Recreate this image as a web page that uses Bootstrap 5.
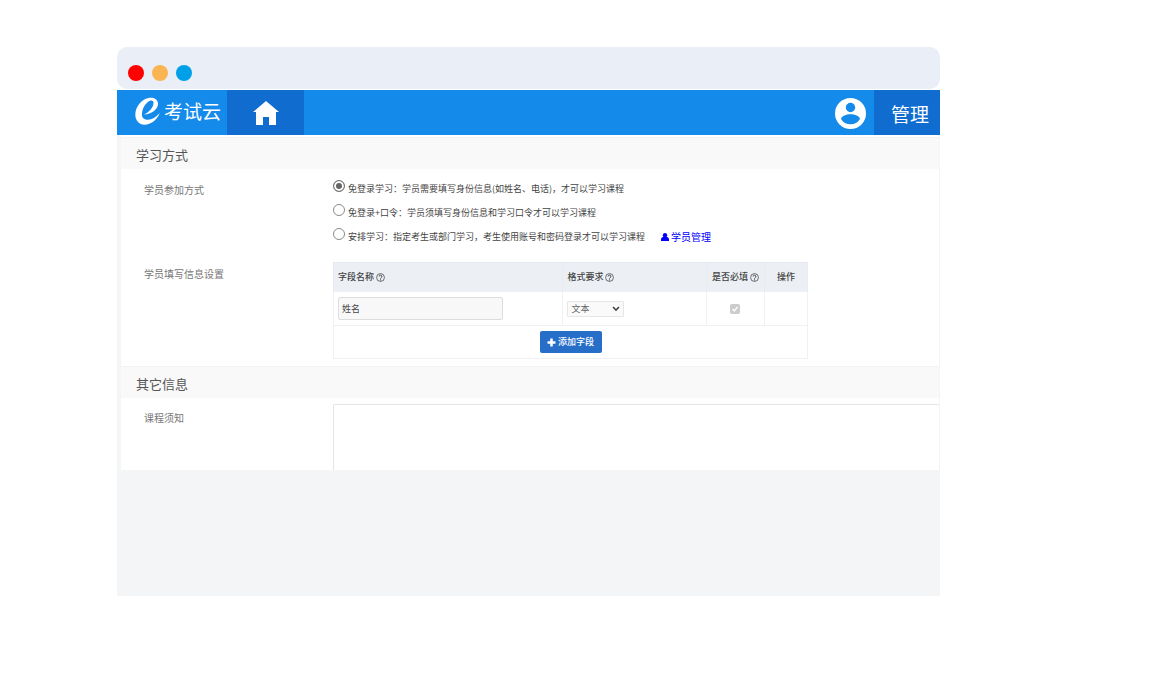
<!DOCTYPE html>
<html lang="zh-CN">
<head>
<meta charset="utf-8">
<meta name="viewport" content="width=device-width, initial-scale=1">
<title>考试云</title>
<link href="https://cdn.jsdelivr.net/npm/bootstrap@5.3.0/dist/css/bootstrap.min.css" rel="stylesheet">
<style>
  body { font-family: "Noto Sans CJK SC", sans-serif; background: #fff; color: #444; font-size: 9px; line-height: 16px; }
  .stage { padding: 47px 215px 83px 117px; }
  .title-strip { height: 42px; padding: 10px 11px 0; border-radius: 10px; background: #eaeff7; margin-bottom: 1px; }
  .dot { width: 16px; height: 16px; border-radius: 50%; }
  .dot-red { background: #ff0000; }
  .dot-amber { background: #f9b552; }
  .dot-blue { background: #00a0e9; }
  .topbar { height: 45px; background: #148aea; color: #fff; }
  .topbar a { color: #fff; text-decoration: none; font-size: 19px; line-height: 28px; }
  .brand { width: 110px; padding-left: 18px; padding-bottom: 4px; gap: 4px; }
  .tab-dark { background: #106dcf; }
  .tab-home { width: 77px; padding-top: 1px; }
  .tab-manage { width: 66px; padding-left: 6px; padding-top: 2px; }
  .tab-user { width: 47px; padding-top: 1px; }
  .workspace { background: #f3f5f7; padding: 0 1px 126px 4px; }
  .sheet { background: #fff; padding-top: 2px; }
  .section-title { font-size: 13px; line-height: 18px; font-weight: 400; color: #555; background: #f9f9f9; margin: 0; padding: 8px 15px 5px; border-top: 1px solid #f3f3f3; }
  .field-name { width: 212px; padding-left: 23px; font-size: 10px; color: #777; flex: none; }
  .mode-row { padding: 5px 0 16px; }
  .mode-row .field-name, .notice-row .field-name { padding-top: 8px; }
  .notice-row .field-name { padding-top: 12px; }
  .fields-row { padding-bottom: 7px; }
  .fields-row .field-name { padding-top: 4px; }
  .choice { height: 24px; gap: 3px; }
  .choice input { appearance: none; width: 12px; height: 12px; margin: 0; border: 1px solid #8a8a8a; border-radius: 50%; background: #fff; flex: none; }
  .choice input:checked { background: #666; border-color: #777; box-shadow: inset 0 0 0 2px #fff; }
  .choice label { padding-top: 5px; }
  .choice a { color: #0000ff; text-decoration: none; margin-left: 13px; padding-top: 5px; gap: 2px; font-size: 10px; }
  .fields { max-width: 475px; table-layout: fixed; margin: 0; border: 1px solid #e6eaf0; color: #444; }
  .fields th { background: #ecf0f5; font-weight: 500; color: #444; padding: 6px 4px; height: 29px; white-space: nowrap; border: 0; border-right: 1px solid #e8ecf2; }
  .fields td { padding: 5px 4px; background: #fff; border: 1px solid #eff1f5; height: 33px; vertical-align: middle; }
  .fields .name-box { width: 165px; height: 23px; border: 1px solid #ddd; border-radius: 2px; background: #f8f8f8; padding: 0 3px; font-size: 9px; color: #444; }
  .kind { width: 57px; }
  .kind select { width: 100%; height: 16px; border: 1px solid #e6e6e6; border-radius: 1px; background: #fafafa; color: #666; padding: 0 3px; font-size: 9px; line-height: 14px; appearance: none; display: block; opacity: 1; }
  .kind svg { right: 4px; top: 5px; pointer-events: none; }
  .tick { width: 10px; }
  .need { appearance: none; width: 10px; height: 10px; border-radius: 2px; background: #ccc; margin: 0; display: block; }
  .tick svg { left: 2px; top: 2px; }
  .btn-add { background: #276ec9; color: #fff; font-size: 9px; line-height: 16px; font-weight: 500; border: 0; border-radius: 2px; padding: 3px 7px; width: 62px; height: 22px; gap: 2px; }
  .notice-box { padding-top: 6px; }
  .notice { display: block; width: 100%; height: 66px; border: 1px solid #e3e5e8; border-width: 1px 0 0 1px; border-radius: 2px 0 0 0; resize: none; background: #fff; }
  @media (max-width: 900px) { .stage { padding: 16px; } }
</style>
</head>
<body>
<svg width="0" height="0" class="d-none">
  <symbol id="help" viewBox="0 0 16 16"><circle cx="8" cy="8" r="7" fill="none" stroke="#555" stroke-width="1.5"/><path d="M5.5 6.3a2.5 2.5 0 1 1 3.6 2.2C8.200 9 8 9.400 8 10.300" fill="none" stroke="#444" stroke-width="1.700"/><circle cx="8" cy="12.400" r="1.100" fill="#444"/></symbol>
</svg>
<main class="stage">
  <div class="title-strip d-flex align-items-center gap-2">
    <span class="dot dot-red"></span><span class="dot dot-amber"></span><span class="dot dot-blue"></span>
  </div>
  <nav class="topbar d-flex">
    <a href="#" class="brand d-flex align-items-center">
      <svg width="25" height="28" viewBox="0 0 25 28" fill="#fff" fill-rule="evenodd"><path d="M9 17.500C16 17.200 23.300 12.500 23 6.500C22.800 2 18.500 .2 14.500 .8C6.500 2 .3 10 .3 17.500C.3 23.500 4 27.700 9.500 27.700C16 27.700 22 23 24.800 16C21 20.300 17 22.800 13 22.800C8.500 22.800 6.500 20.500 7 16C7.800 10 12 4.200 15.800 3.500C18 3.200 18.900 4.500 18.400 7C17.600 11.500 13.500 15.500 9 17.500Z"/></svg>
      <span>考试云</span>
    </a>
    <a href="#" class="tab-dark tab-home d-flex align-items-center justify-content-center" aria-label="首页">
      <svg width="26" height="24" viewBox="0 0 26 24" fill="#fff"><path d="M13 0 26 11H23V24H16V16H10V24H3V11H0Z"/></svg>
    </a>
    <a href="#" class="tab-user ms-auto d-flex align-items-center justify-content-center" aria-label="用户">
      <svg width="31" height="31" viewBox="0 0 31 31"><circle cx="15.500" cy="15.500" r="15.500" fill="#fff"/><circle cx="15.500" cy="9.500" r="4.700" fill="#148aea"/><path d="M6 21C7.500 14.700 23.500 14.700 25 21C21.500 28 9.500 28 6 21Z" fill="#148aea"/></svg>
    </a>
    <a href="#" class="tab-dark tab-manage d-flex align-items-center justify-content-center">管理</a>
  </nav>
  <div class="workspace">
    <form class="sheet">
      <h2 class="section-title">学习方式</h2>
      <div class="mode-row d-flex">
        <div class="field-name">学员参加方式</div>
        <div class="flex-fill">
          <div class="choice d-flex align-items-center"><input type="radio" name="mode" id="m1" checked><label for="m1">免登录学习：学员需要填写身份信息(如姓名、电话)，才可以学习课程</label></div>
          <div class="choice d-flex align-items-center"><input type="radio" name="mode" id="m2"><label for="m2">免登录+口令：学员须填写身份信息和学习口令才可以学习课程</label></div>
          <div class="choice d-flex align-items-center"><input type="radio" name="mode" id="m3"><label for="m3">安排学习：指定考生或部门学习，考生使用账号和密码登录才可以学习课程</label>
            <a href="#" class="d-flex align-items-center"><svg width="8" height="8" viewBox="0 0 8 8" fill="#00f"><circle cx="4" cy="2.200" r="2.200"/><path d="M0 8V6.500C0 5 1 4 2 4H6C7 4 8 5 8 6.500V8Z"/></svg>学员管理</a></div>
        </div>
      </div>
      <div class="fields-row d-flex">
        <div class="field-name">学员填写信息设置</div>
        <div class="flex-fill">
          <table class="fields w-100">
            <colgroup><col style="width:48.400%"><col style="width:30.300%"><col style="width:12.200%"><col style="width:9.100%"></colgroup>
            <thead><tr>
              <th>字段名称 <svg width="9" height="9"><use href="#help"/></svg></th>
              <th>格式要求 <svg width="9" height="9"><use href="#help"/></svg></th>
              <th class="text-center">是否必填 <svg width="9" height="9"><use href="#help"/></svg></th>
              <th class="text-center">操作</th>
            </tr></thead>
            <tbody>
              <tr>
                <td><input class="name-box" type="text" value="姓名" aria-label="字段名称" readonly></td>
                <td><div class="kind position-relative"><select aria-label="格式要求" disabled><option>文本</option></select><svg class="position-absolute" width="8" height="6" viewBox="0 0 8 6"><path d="M1 1 4 4 7 1" fill="none" stroke="#444" stroke-width="1.600"/></svg></div></td>
                <td><div class="tick position-relative mx-auto"><input type="checkbox" class="need" aria-label="是否必填" checked disabled><svg class="position-absolute" width="6" height="6" viewBox="0 0 6 6"><path d="M.5 3 2.300 5 5.500 1" fill="none" stroke="#fff" stroke-width="1.300"/></svg></div></td>
                <td></td>
              </tr>
              <tr><td colspan="4"><button type="button" class="btn btn-add d-flex align-items-center justify-content-center mx-auto"><svg width="9" height="9" viewBox="0 0 9 9"><path d="M4.500.5V8.500M.5 4.500H8.500" stroke="#fff" stroke-width="2.500"/></svg>添加字段</button></td></tr>
            </tbody>
          </table>
        </div>
      </div>
      <h2 class="section-title">其它信息</h2>
      <div class="notice-row d-flex">
        <label class="field-name" for="notice">课程须知</label>
        <div class="notice-box flex-fill"><textarea id="notice" class="notice"></textarea></div>
      </div>
    </form>
  </div>
</main>
<script src="https://cdn.jsdelivr.net/npm/bootstrap@5.3.0/dist/js/bootstrap.bundle.min.js"></script>
</body>
</html>
